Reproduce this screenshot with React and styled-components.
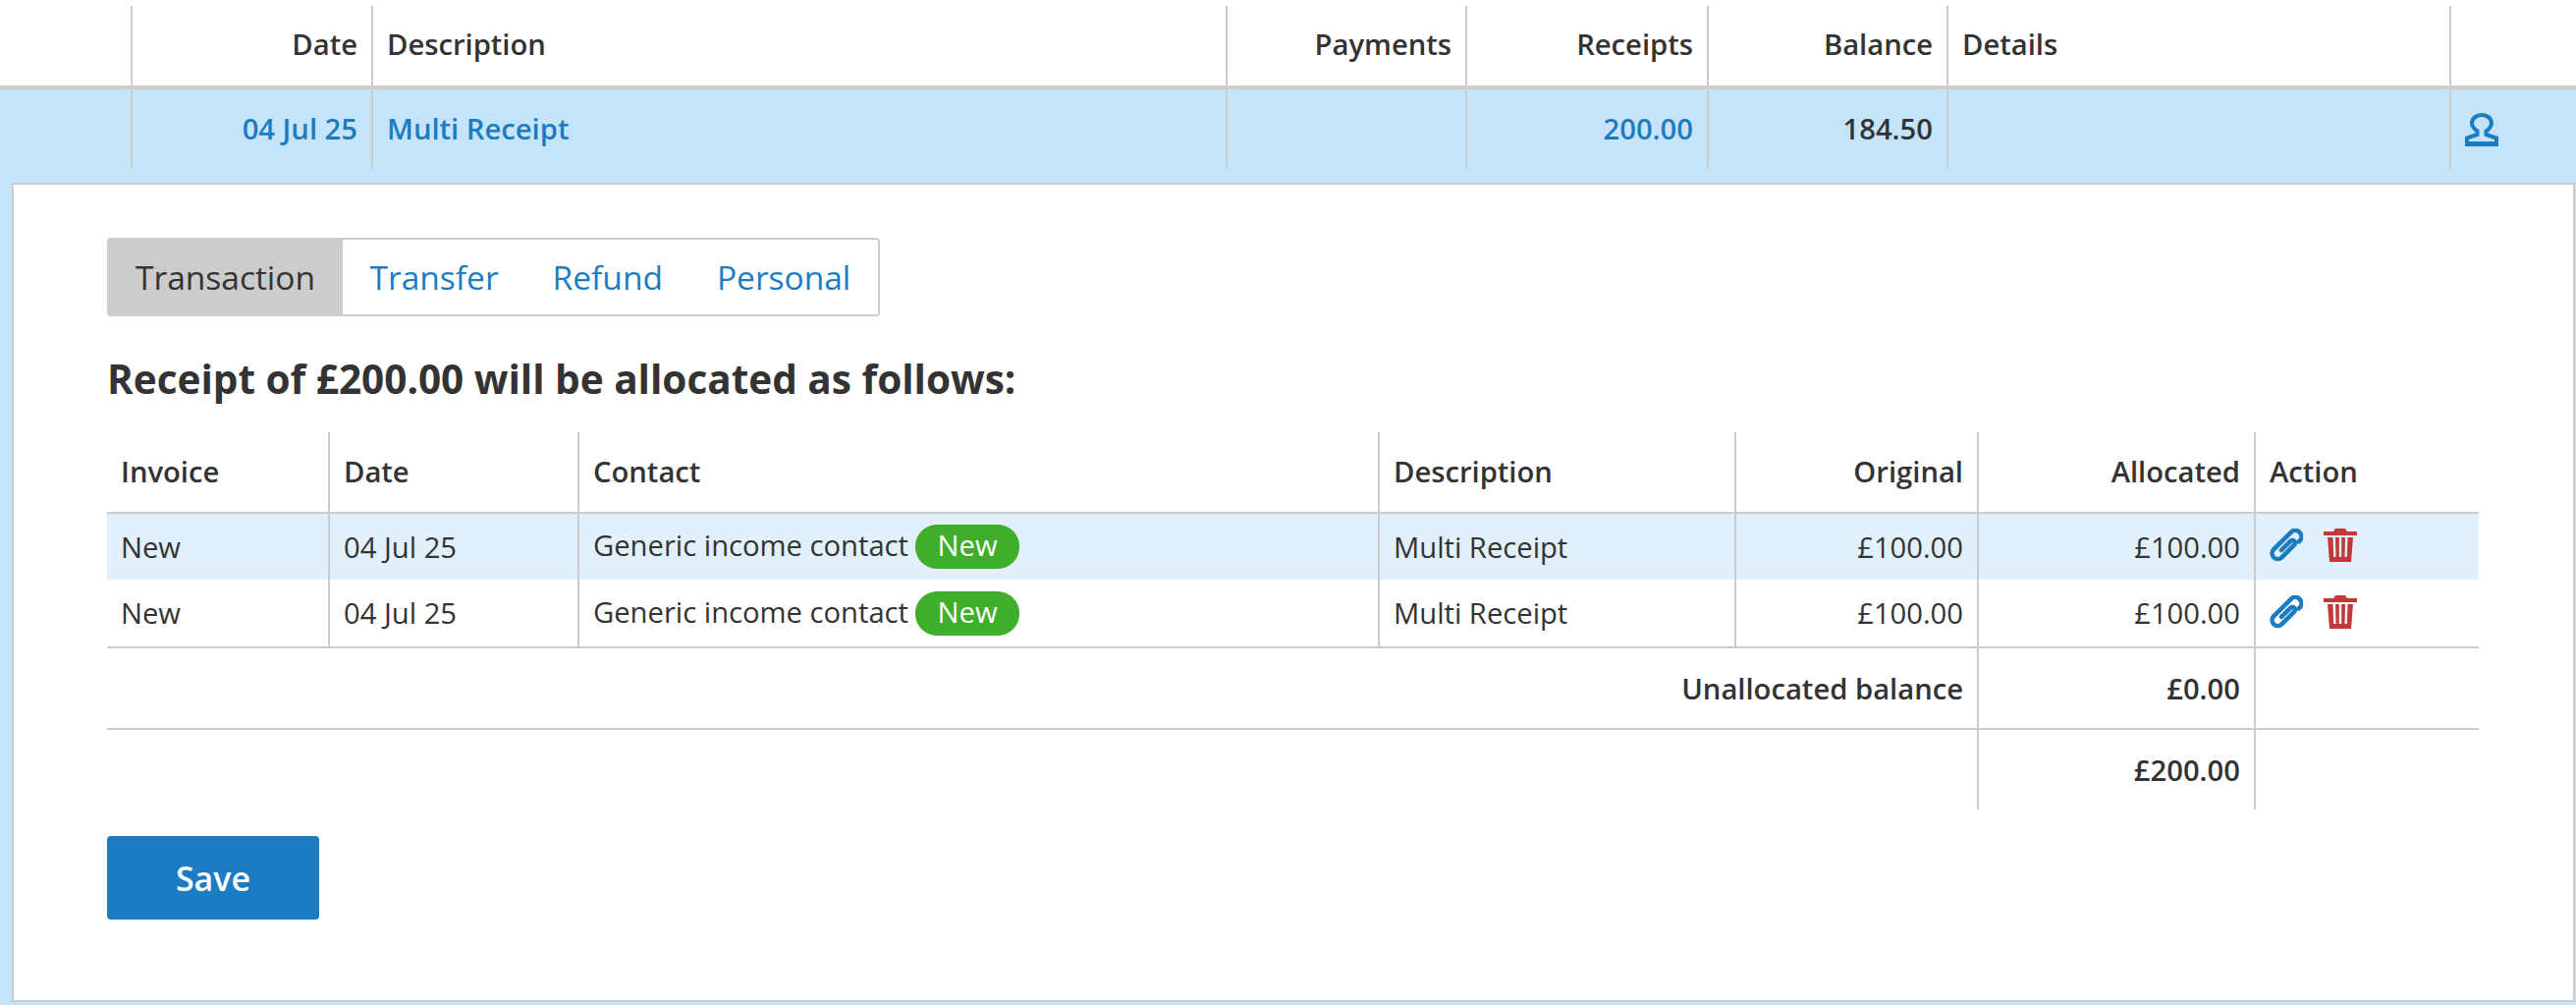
import React from "react";
import styled, { createGlobalStyle } from "styled-components";

const GlobalStyle = createGlobalStyle`
  html, body { margin: 0; padding: 0; background: #fff; }
  body {
    font-family: "Open Sans", "Liberation Sans", sans-serif;
    font-size: 29.2px;
    color: #333;
  }
`;

const blue = "#1c7cc1";
const line = "#ccc";

const Page = styled.div`
  padding-top: 6px;
  min-height: 1017px;
  display: flex;
  flex-direction: column;
`;

const LedgerTable = styled.table`
  width: 100%;
  table-layout: fixed;
  border-collapse: separate;
  border-spacing: 0;
`;

const LedgerHead = styled.th`
  height: 85px;
  padding: 0 14px 4px;
  box-sizing: border-box;
  font-weight: 600;
  text-align: ${(p) => (p.$right ? "right" : "left")};
  border-left: ${(p) => (p.$first ? "none" : `2px solid ${line}`)};
  border-bottom: 4px solid ${line};
`;

const LedgerCell = styled.td`
  height: 81px;
  padding: 0 14px 2px;
  box-sizing: border-box;
  font-weight: 600;
  color: ${(p) => (p.$link ? blue : "#333")};
  text-align: ${(p) => (p.$right ? "right" : "left")};
  border-left: ${(p) => (p.$first ? "none" : `2px solid ${line}`)};
`;

const OpenRow = styled.div`
  flex: 1;
  background: #c5e4f9;
  padding: 0 1px 3px 12px;
  display: flex;
  flex-direction: column;
`;

const RowStrip = styled.div`
  margin: 0 -1px 14px -12px;
`;

const Panel = styled.div`
  flex: 1;
  background: #fff;
  border: 2px solid ${line};
  padding: 54px 95px 0;
`;

const Tabs = styled.div`
  display: inline-flex;
  height: 80px;
  box-sizing: border-box;
  border: 2px solid ${line};
  border-radius: 4px;
  overflow: hidden;
  font-size: 33.5px;
`;

const Tab = styled.div`
  display: flex;
  align-items: center;
  padding: ${(p) => (p.$active ? "0 28px 0 27px" : "0 27.5px")};
  background: ${(p) => (p.$active ? line : "#fff")};
  color: ${(p) => (p.$active ? "#333" : blue)};
`;

const Heading = styled.h2`
  margin: 39px 0 29px;
  font-size: 40.5px;
  line-height: 50px;
  font-weight: 700;
`;

const AllocTable = styled.table`
  width: 2415px;
  table-layout: fixed;
  border-collapse: separate;
  border-spacing: 0;
`;

const AllocHead = styled.th`
  height: 83px;
  padding: 0 14px 2px;
  box-sizing: border-box;
  font-weight: 600;
  text-align: ${(p) => (p.$right ? "right" : "left")};
  border-left: ${(p) => (p.$first ? "none" : `2px solid ${line}`)};
  border-bottom: 2px solid ${line};
`;

const AllocRow = styled.tr`
  background: ${(p) => (p.$tint ? "#e1f0fa" : "transparent")};
`;

const AllocCell = styled.td`
  height: ${(p) => (p.$last ? "70px" : "67px")};
  padding: 0 14px;
  box-sizing: border-box;
  text-align: ${(p) => (p.$right ? "right" : "left")};
  border-left: ${(p) => (p.$first ? "none" : `2px solid ${line}`)};
  border-bottom: ${(p) => (p.$last ? `2px solid ${line}` : "none")};
`;

const TotalCell = styled.td`
  height: ${(p) => (p.$end ? "81px" : "83px")};
  padding: 0 14px;
  box-sizing: border-box;
  font-weight: 600;
  text-align: right;
  border-left: ${(p) => (p.$first ? "none" : `2px solid ${line}`)};
  border-bottom: ${(p) => (p.$end ? "none" : `2px solid ${line}`)};
`;

const Badge = styled.span`
  display: inline-flex;
  align-items: center;
  justify-content: center;
  box-sizing: border-box;
  width: 106px;
  height: 45px;
  padding-bottom: 3px;
  margin-left: 7px;
  border-radius: 22px;
  background: #3eae2b;
  color: #fff;
`;

const IconRow = styled.div`
  display: flex;
  gap: 21px;
  align-items: center;
  margin-bottom: 3px;
`;

const PersonWrap = styled.div`
  display: flex;
  margin-top: 3px;
`;

const SaveButton = styled.button`
  display: block;
  margin-top: 27px;
  width: 216px;
  height: 85px;
  border: none;
  border-radius: 4px;
  background: ${blue};
  color: #fff;
  font-family: inherit;
  font-size: 34px;
  font-weight: 600;
`;

const ClipIcon = () => (
  <svg width="34" height="34" viewBox="0 0 34 34" fill="none" stroke={blue} strokeWidth="4.600" strokeLinecap="round">
    <path transform="rotate(45 17 17)" d="M23.500 5.500V4.300A6.250 6.250 0 0 0 11 4.300V29A5.750 5.750 0 0 0 22.500 29V11A2.700 2.700 0 0 0 17 11V24" />
  </svg>
);

const TrashIcon = () => (
  <svg width="34" height="34" viewBox="0 0 34 34" fill="#c03a39">
    <path d="M0 3H10L12 0H22L24 3H34V7H0Z" />
    <path d="M4 9H30L28 34H6ZM9.500 9L10.200 29H12.500L12 9ZM15.800 9V29H18.200V9ZM22 9L21.500 29H23.800L24.500 9Z" fillRule="evenodd" />
  </svg>
);

const PersonIcon = () => (
  <svg width="34" height="34" viewBox="0 0 34 34" fill="none">
    <path
      stroke={blue}
      strokeWidth="4"
      d="M12.500 18.500C9 16 7 13.500 7 10.500C7 5.500 11.500 2 17 2C22.500 2 27 5.500 27 10.500C27 13.500 25 16 21.500 18.500V22L32 25.500V32H2V25.500L12.500 22Z"
    />
    <path fill={blue} d="M1 29H33V34H1Z" />
  </svg>
);

const ledgerCols = [133, 245, 870, 244, 246, 244, 512, 129];
const allocCols = [225, 254, 815, 363, 247, 282, 229];

const allocations = [
  { id: 1, tint: true },
  { id: 2, tint: false },
];

const App = () => (
  <Page>
    <GlobalStyle />
    <LedgerTable>
      <colgroup>
        {ledgerCols.map((w, i) => (
          <col key={i} style={{ width: w }} />
        ))}
      </colgroup>
      <thead>
        <tr>
          <LedgerHead $first />
          <LedgerHead $right>Date</LedgerHead>
          <LedgerHead>Description</LedgerHead>
          <LedgerHead $right>Payments</LedgerHead>
          <LedgerHead $right>Receipts</LedgerHead>
          <LedgerHead $right>Balance</LedgerHead>
          <LedgerHead>Details</LedgerHead>
          <LedgerHead />
        </tr>
      </thead>
    </LedgerTable>
    <OpenRow>
      <RowStrip>
        <LedgerTable>
          <colgroup>
            {ledgerCols.map((w, i) => (
              <col key={i} style={{ width: w }} />
            ))}
          </colgroup>
          <tbody>
            <tr>
              <LedgerCell $first />
              <LedgerCell $right $link>04 Jul 25</LedgerCell>
              <LedgerCell $link>Multi Receipt</LedgerCell>
              <LedgerCell $right />
              <LedgerCell $right $link>200.00</LedgerCell>
              <LedgerCell $right>184.50</LedgerCell>
              <LedgerCell />
              <LedgerCell>
                <PersonWrap>
                  <PersonIcon />
                </PersonWrap>
              </LedgerCell>
            </tr>
          </tbody>
        </LedgerTable>
      </RowStrip>
      <Panel>
        <Tabs>
          <Tab $active>Transaction</Tab>
          <Tab>Transfer</Tab>
          <Tab>Refund</Tab>
          <Tab>Personal</Tab>
        </Tabs>
        <Heading>Receipt of £200.00 will be allocated as follows:</Heading>
        <AllocTable>
          <colgroup>
            {allocCols.map((w, i) => (
              <col key={i} style={{ width: w }} />
            ))}
          </colgroup>
          <thead>
            <tr>
              <AllocHead $first>Invoice</AllocHead>
              <AllocHead>Date</AllocHead>
              <AllocHead>Contact</AllocHead>
              <AllocHead>Description</AllocHead>
              <AllocHead $right>Original</AllocHead>
              <AllocHead $right>Allocated</AllocHead>
              <AllocHead>Action</AllocHead>
            </tr>
          </thead>
          <tbody>
            {allocations.map((a) => (
              <AllocRow key={a.id} $tint={a.tint}>
                <AllocCell $first $last={!a.tint}>New</AllocCell>
                <AllocCell $last={!a.tint}>04 Jul 25</AllocCell>
                <AllocCell $last={!a.tint}>
                  Generic income contact<Badge>New</Badge>
                </AllocCell>
                <AllocCell $last={!a.tint}>Multi Receipt</AllocCell>
                <AllocCell $right $last={!a.tint}>£100.00</AllocCell>
                <AllocCell $right $last={!a.tint}>£100.00</AllocCell>
                <AllocCell $last={!a.tint}>
                  <IconRow>
                    <ClipIcon />
                    <TrashIcon />
                  </IconRow>
                </AllocCell>
              </AllocRow>
            ))}
            <tr>
              <TotalCell $first colSpan={5}>Unallocated balance</TotalCell>
              <TotalCell>£0.00</TotalCell>
              <TotalCell />
            </tr>
            <tr>
              <TotalCell $first $end colSpan={5} />
              <TotalCell $end>£200.00</TotalCell>
              <TotalCell $end />
            </tr>
          </tbody>
        </AllocTable>
        <SaveButton>Save</SaveButton>
      </Panel>
    </OpenRow>
  </Page>
);

export default App;
